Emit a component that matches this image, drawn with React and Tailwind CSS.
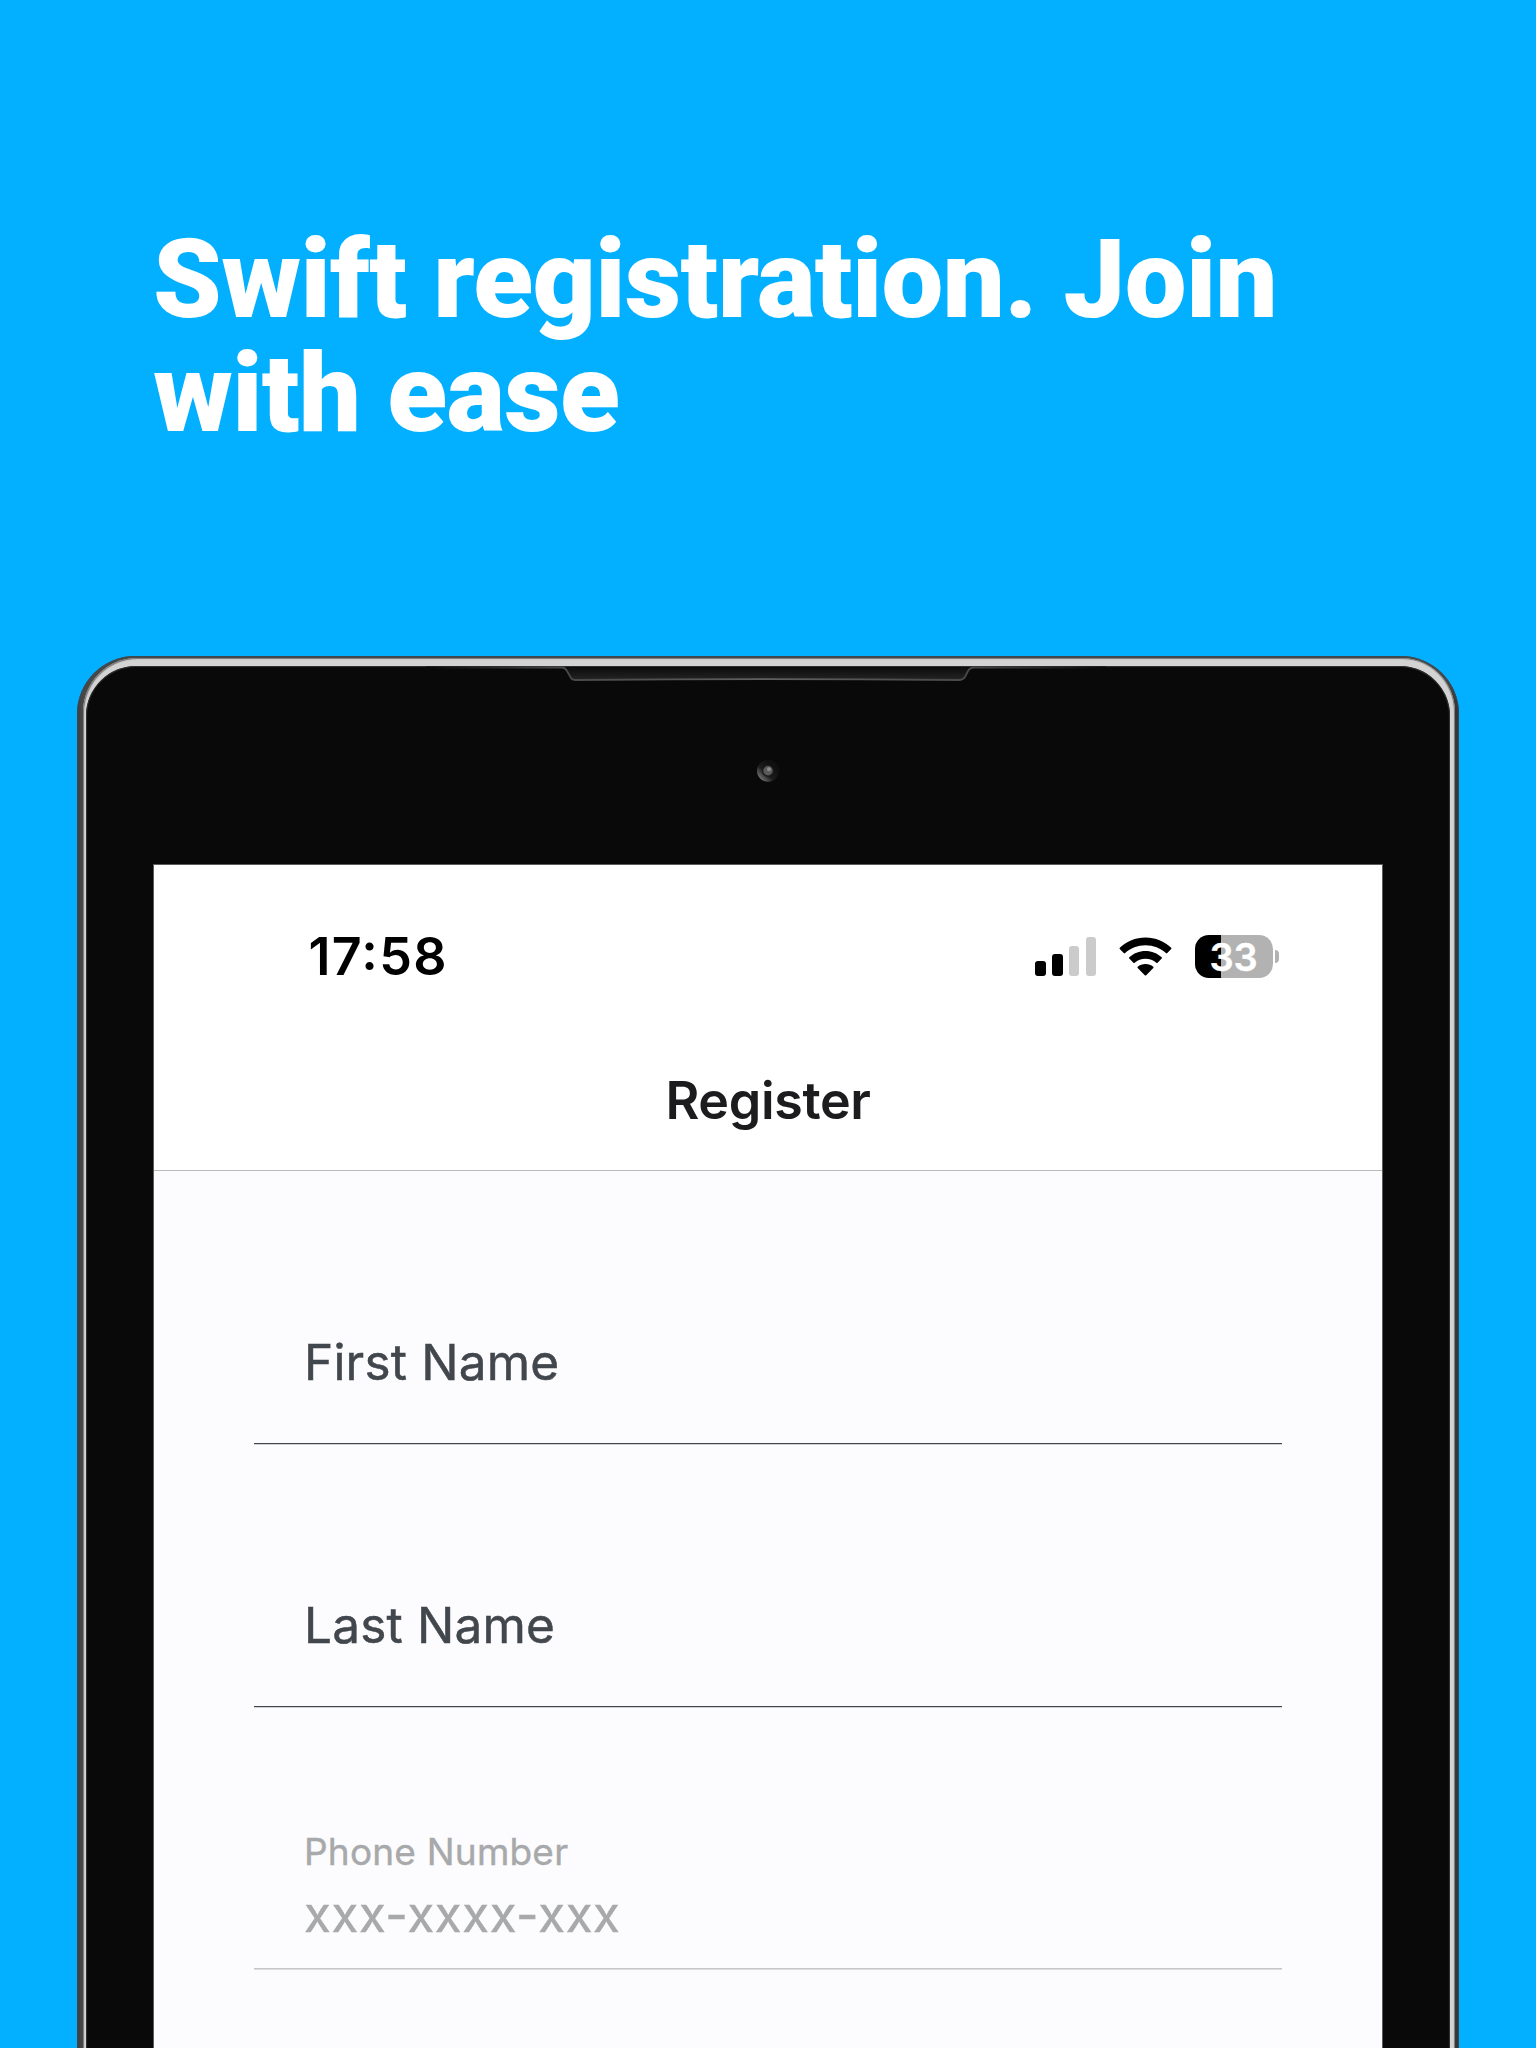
function SignalBars() {
  return (
    <div className="flex h-[39px] items-end gap-[6.2px]">
      <span className="h-[15px] w-[10.5px] rounded-[3px] bg-black" />
      <span className="h-[22px] w-[10.5px] rounded-[3px] bg-black" />
      <span className="h-[30px] w-[10.5px] rounded-[3px] bg-[#cbcbcb]" />
      <span className="h-[39px] w-[10.5px] rounded-[3px] bg-[#cbcbcb]" />
    </div>
  );
}

function WifiIcon() {
  return (
    <svg className="h-[39px] w-[53px]" viewBox="0 0 53 39" fill="#000">
      <path d="M26.5 0.6C16.6 0.6 7.5 4.4 0.8 10.8C0.4 11.2 0.4 11.7 0.8 12.1L4.7 16.1C5.1 16.5 5.7 16.5 6.1 16.1C11.5 11.2 18.7 8.3 26.5 8.3C34.3 8.3 41.5 11.2 46.9 16.1C47.3 16.5 47.9 16.5 48.3 16.1L52.2 12.1C52.6 11.7 52.6 11.2 52.2 10.8C45.5 4.4 36.4 0.6 26.5 0.6Z" />
      <path d="M26.5 14C20.3 14 14.5 16.4 10.3 20.3C9.9 20.7 9.9 21.2 10.3 21.6L14.4 25.7C14.8 26.1 15.3 26.1 15.7 25.7C18.6 23.2 22.4 21.7 26.5 21.7C30.6 21.7 34.4 23.2 37.3 25.7C37.7 26.1 38.2 26.1 38.6 25.7L42.7 21.6C43.1 21.2 43.1 20.7 42.7 20.3C38.5 16.4 32.7 14 26.5 14Z" />
      <path d="M26.5 27C23.5 27 20.8 28 18.7 29.7C18.3 30.1 18.3 30.6 18.7 31L25.8 38.3C26.2 38.7 26.8 38.7 27.2 38.3L34.3 31C34.7 30.6 34.7 30.1 34.3 29.7C32.2 28 29.5 27 26.5 27Z" />
    </svg>
  );
}

function Battery() {
  return (
    <div className="flex items-center gap-[2.5px]">
      <div className="flex h-[43px] w-[78px] items-center justify-center rounded-[14px] bg-[linear-gradient(90deg,#000_26px,#b2b2b2_26px)]">
        <span className="text-[38px] leading-none font-semibold tracking-[-0.3px] text-white [-webkit-text-stroke:0.4px]">33</span>
      </div>
      <span className="h-[13px] w-[4px] rounded-r-full bg-[#b2b2b2]" />
    </div>
  );
}

function Field({ label }) {
  return (
    <div className="flex h-[262.6px] flex-col justify-end border-b border-[#42464b] pb-[55px] pl-[50px] shadow-[0_1px_0_#d0d1d3]">
      <label className="text-[49.5px] leading-none tracking-[0.2px] whitespace-nowrap text-[#42474d] [-webkit-text-stroke:0.5px]">{label}</label>
    </div>
  );
}

function PhoneField() {
  return (
    <div className="flex h-[262.6px] flex-col justify-end border-b border-[#c6c6c8] pb-[29px] pl-[50px] text-[#a8a9ab] shadow-[0_1px_0_#dddddf]">
      <label className="text-[37px] leading-none tracking-[0.2px] whitespace-nowrap [-webkit-text-stroke:0.4px]">Phone Number</label>
      <span className="mt-[20px] text-[49px] leading-none tracking-[0.7px] whitespace-nowrap [-webkit-text-stroke:0.5px]">xxx-xxxx-xxx</span>
    </div>
  );
}

function TopBezel() {
  return (
    <svg className="h-[199px] w-full shrink-0" viewBox="0 0 1364 199" fill="none" preserveAspectRatio="none">
      <defs>
        <linearGradient id="grille" x1="0" y1="0" x2="0" y2="1">
          <stop offset="0" stopColor="#0b0b0b" />
          <stop offset="1" stopColor="#242424" />
        </linearGradient>
        <linearGradient id="edge" x1="340" y1="0" x2="1020" y2="0" gradientUnits="userSpaceOnUse">
          <stop offset="0" stopColor="#090909" />
          <stop offset="0.2" stopColor="#484848" />
          <stop offset="0.5" stopColor="#606060" />
          <stop offset="0.8" stopColor="#484848" />
          <stop offset="1" stopColor="#090909" />
        </linearGradient>
        <linearGradient id="lens" x1="0.1" y1="0.9" x2="0.7" y2="0.3">
          <stop offset="0" stopColor="#808080" />
          <stop offset="0.5" stopColor="#1c1c1c" />
          <stop offset="1" stopColor="#101010" />
        </linearGradient>
      </defs>
      <path d="M479 1L486 12Q487 14 490 14Q682 12 873 14Q877 14 879 11L885 1Z" fill="url(#grille)" />
      <path d="M340 1.5H476Q479 1.5 481 5L485 12Q486 14 490 14Q682 12.2 873 14Q877 14 879 11L882 5Q884 1.5 888 1.5H1020" stroke="url(#edge)" strokeWidth="1.8" />
      <circle cx="682" cy="104.7" r="11" fill="url(#lens)" />
      <circle cx="682" cy="104.7" r="6" fill="#1b1b1b" />
      <circle cx="682" cy="104.7" r="4.7" fill="#5a5a5a" />
      <circle cx="683" cy="103.2" r="2" fill="#8c8c8c" />
    </svg>
  );
}

export default function App() {
  return (
    <main className="flex h-[2048px] w-[1536px] flex-col overflow-hidden bg-[#03b0ff] font-['Inter','Liberation_Sans',sans-serif]">
      <header className="h-[656px] shrink-0 pt-[222.5px] pl-[153px]">
        <h1 className="font-['Roboto',sans-serif] text-[110px] leading-[114.4px] font-black tracking-[-0.65px] whitespace-nowrap text-white">
          Swift registration. Join
          <br />
          with ease
        </h1>
      </header>
      <section className="ml-[77px] flex h-[1520px] w-[1382px] shrink-0 flex-col rounded-t-[58px] bg-[linear-gradient(90deg,#3c3c3c,#484848_5px,#484848_1370px,#303030)] pt-[2px] pr-[4px] pl-[6px] shadow-[inset_0_0_1px_1px_#3b4a52]">
        <div className="flex h-full flex-col rounded-t-[54px] bg-[#d3d3d3] pt-[8px] pr-[5px] pl-[3px] shadow-[inset_1px_1px_1px_#777,inset_-1px_0_1px_#777]">
          <div className="flex h-full flex-col rounded-t-[50px] bg-[#090909] shadow-[inset_0_0_1px_1px_#333]">
            <TopBezel />
            <div className="mx-[68px] flex h-[1300px] flex-col bg-[#fcfcfe] shadow-[0_0_0_1px_#5c5c5c]">
              <div className="flex h-[306px] shrink-0 flex-col border-b border-[#b9b9bb] bg-white">
                <div className="flex h-[182px] items-center justify-between pt-[1px] pr-[103px] pl-[154.5px]">
                  <span className="mt-[1px] text-[52px] leading-none font-semibold tracking-[1.3px] text-black">
                    17<span className="relative -top-[5px]">:</span>58
                  </span>
                  <div className="flex items-center">
                    <SignalBars />
                    <div className="ml-[22.5px] flex">
                      <WifiIcon />
                    </div>
                    <div className="ml-[23px]">
                      <Battery />
                    </div>
                  </div>
                </div>
                <h2 className="mt-[28px] text-center text-[52px] leading-none font-semibold tracking-[-0.35px] text-[#1c1c1e]">
                  Register
                </h2>
              </div>
              <form className="mx-[100px] mt-[10.4px] flex flex-col">
                <Field label="First Name" />
                <Field label="Last Name" />
                <PhoneField />
              </form>
            </div>
          </div>
        </div>
      </section>
    </main>
  );
}
